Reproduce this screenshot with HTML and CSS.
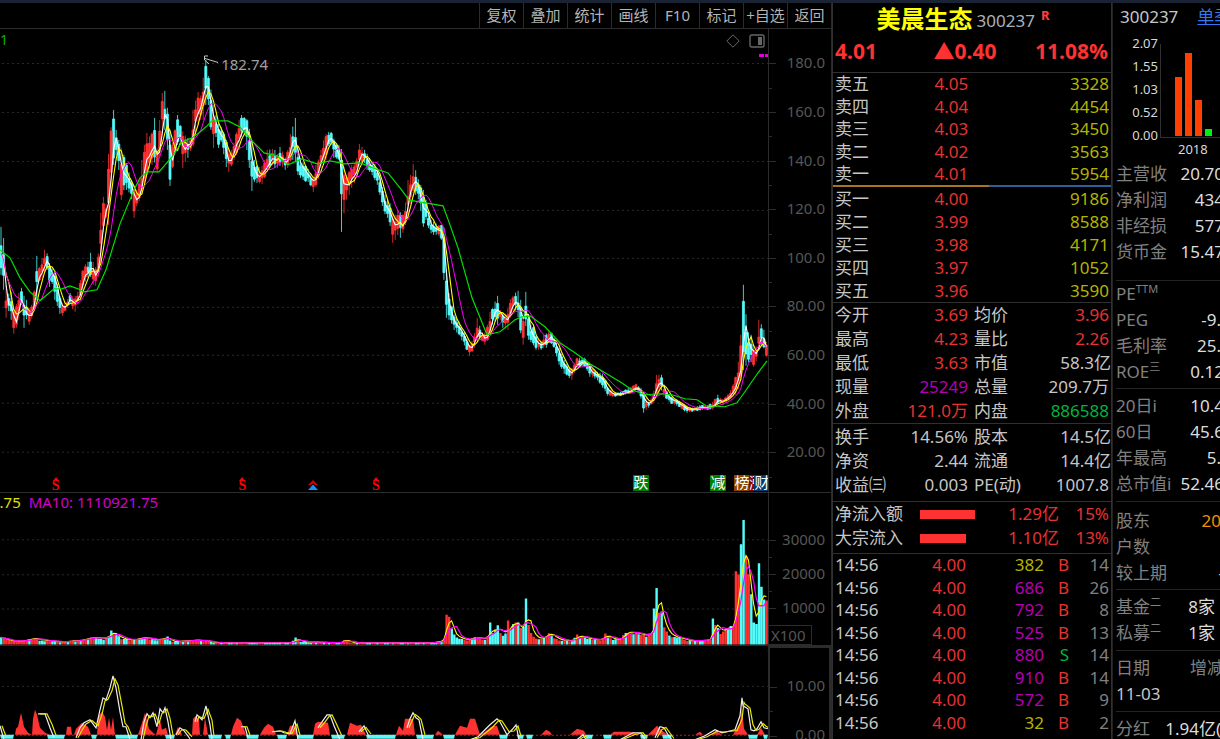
FILE: index.html
```html
<!DOCTYPE html>
<html lang="zh-CN">
<head>
<meta charset="utf-8">
<title>美晨生态 300237</title>
<link rel="stylesheet" href="styles.css">
</head>
<body>
<div class="app">
  <section class="charts">
    <nav class="toolbar">
      <button>复权</button><button>叠加</button><button>统计</button><button>画线</button><button>F10</button><button>标记</button><button>+自选</button><button>返回</button>
    </nav>

    <div class="panel price">
      <div class="plot">
        <svg id="price" viewBox="0 29 768 463" preserveAspectRatio="none"></svg>
        <span class="ma-tail">1</span>
        <span class="peak">182.74</span>
        <div class="tools">
          <svg width="14" height="14" viewBox="0 0 14 14"><path d="M7 .8 13.2 7 7 13.2 .8 7Z" fill="none" stroke="#666" /></svg>
          <svg width="16" height="14" viewBox="0 0 16 14"><rect x="1" y="1" width="14" height="12" rx="1.5" fill="none" stroke="#666" stroke-width="1.4"/><rect x="9" y="3" width="4" height="8" fill="#666"/></svg>
        </div>
        <i class="dash"></i>
        <span class="mark s1"><svg width="8" height="4" viewBox="0 0 8 4"><path d="M4 0 7 4H1Z" fill="red"/></svg>S</span>
        <span class="mark s2"><svg width="8" height="4" viewBox="0 0 8 4"><path d="M4 0 7 4H1Z" fill="red"/></svg>S</span>
        <span class="mark up"><svg width="10" height="11" viewBox="0 0 10 11"><path d="M5 0 10 5H7L5 3.5 3 5H0Z" fill="#d00000"/><path d="M5 4.500 10 10H0Z" fill="#1890ff"/></svg></span>
        <span class="mark s3"><svg width="8" height="4" viewBox="0 0 8 4"><path d="M4 0 7 4H1Z" fill="red"/></svg>S</span>
        <span class="tag t1">跌</span>
        <span class="tag t2">减</span>
        <span class="tag t3">榜</span>
        <span class="tag t4">涨</span>
        <span class="tag t5">财</span>
      </div>
      <ol class="axis"><li>180.0</li><li>160.0</li><li>140.0</li><li>120.0</li><li>100.0</li><li>80.00</li><li>60.00</li><li>40.00</li><li>20.00</li></ol>
    </div>

    <div class="panel volume">
      <div class="plot">
        <svg id="volume" viewBox="0 493 768 152" preserveAspectRatio="none"></svg>
        <p class="legend"><span class="ma5">6.75</span> <span class="ma10">MA10: 1110921.75</span></p>
      </div>
      <div class="side">
        <ol class="axis"><li>30000</li><li>20000</li><li>10000</li></ol>
        <span class="unit">X100</span>
      </div>
    </div>

    <div class="panel macd">
      <div class="plot"><svg id="macd" viewBox="0 646 768 93" preserveAspectRatio="none"></svg></div>
      <ol class="axis"><li>10.00</li><li>0.00</li></ol>
    </div>
  </section>

  <section class="quote">
    <header class="name"><h1>美晨生态</h1><span>300237</span><sup>R</sup></header>
    <div class="last"><b>4.01</b><b>▲0.40</b><b>11.08%</b></div>
    <table class="orders asks">
      <tr><th>卖五</th><td>4.05</td><td>3328</td></tr>
      <tr><th>卖四</th><td>4.04</td><td>4454</td></tr>
      <tr><th>卖三</th><td>4.03</td><td>3450</td></tr>
      <tr><th>卖二</th><td>4.02</td><td>3563</td></tr>
      <tr><th>卖一</th><td>4.01</td><td>5954</td></tr>
    </table>
    <div class="ratio"></div>
    <table class="orders bids">
      <tr><th>买一</th><td>4.00</td><td>9186</td></tr>
      <tr><th>买二</th><td>3.99</td><td>8588</td></tr>
      <tr><th>买三</th><td>3.98</td><td>4171</td></tr>
      <tr><th>买四</th><td>3.97</td><td>1052</td></tr>
      <tr><th>买五</th><td>3.96</td><td>3590</td></tr>
    </table>
    <table class="stats">
      <tr><th>今开</th><td class="red">3.69</td><th>均价</th><td class="red">3.96</td></tr>
      <tr><th>最高</th><td class="red">4.23</td><th>量比</th><td class="red">2.26</td></tr>
      <tr><th>最低</th><td class="red">3.63</td><th>市值</th><td class="cjk">58.3亿</td></tr>
      <tr><th>现量</th><td class="purple">25249</td><th>总量</th><td>209.7万</td></tr>
      <tr><th>外盘</th><td class="red">121.0万</td><th>内盘</th><td class="green">886588</td></tr>
    </table>
    <table class="stats ratios">
      <tr><th>换手</th><td>14.56%</td><th>股本</th><td class="cjk">14.5亿</td></tr>
      <tr><th>净资</th><td>2.44</td><th>流通</th><td class="cjk">14.4亿</td></tr>
      <tr><th>收益㈢</th><td>0.003</td><th>PE(动)</th><td>1007.8</td></tr>
    </table>
    <table class="flow">
      <tr><th>净流入额</th><td><i style="width:55px"></i></td><td>1.29亿</td><td>15%</td></tr>
      <tr><th>大宗流入</th><td><i style="width:46px"></i></td><td>1.10亿</td><td>13%</td></tr>
    </table>
    <table class="trades">
      <tr><th>14:56</th><td>4.00</td><td class="small">382</td><td>B</td><td>14</td></tr>
      <tr><th>14:56</th><td>4.00</td><td>686</td><td>B</td><td>26</td></tr>
      <tr><th>14:56</th><td>4.00</td><td>792</td><td>B</td><td>8</td></tr>
      <tr><th>14:56</th><td>4.00</td><td>525</td><td>B</td><td>13</td></tr>
      <tr><th>14:56</th><td>4.00</td><td>880</td><td class="green">S</td><td>14</td></tr>
      <tr><th>14:56</th><td>4.00</td><td>910</td><td>B</td><td>14</td></tr>
      <tr><th>14:56</th><td>4.00</td><td>572</td><td>B</td><td>9</td></tr>
      <tr><th>14:56</th><td>4.00</td><td class="small">32</td><td>B</td><td>2</td></tr>
      <tr><th>14:57</th><td>4.00</td><td class="small">368</td><td>B</td><td>13</td></tr>
    </table>
  </section>

  <aside class="finance">
    <header><span>300237</span><a href="#">单季</a></header>
    <div class="mini">
      <ul><li>2.07</li><li>1.55</li><li>1.03</li><li>0.52</li><li>0.00</li></ul>
      <div class="mini-plot">
        <div class="bars"><i style="height:59px"></i><i style="height:83px"></i><i style="height:36px"></i><i class="up" style="height:7px"></i></div>
        <span>2018</span>
      </div>
    </div>
    <dl class="g1">
      <div><dt>主营收</dt><dd>20.70</dd></div>
      <div><dt>净利润</dt><dd>434</dd></div>
      <div><dt>非经损</dt><dd>577</dd></div>
      <div><dt>货币金</dt><dd>15.47</dd></div>
    </dl>
    <dl class="g2">
      <div><dt>PE<sup>TTM</sup></dt><dd></dd></div>
      <div><dt>PEG</dt><dd class="edge">-9.</dd></div>
      <div><dt>毛利率</dt><dd class="edge">25.</dd></div>
      <div><dt>ROE<sup>三</sup></dt><dd>0.12</dd></div>
    </dl>
    <dl>
      <div><dt>20日i</dt><dd>10.4</dd></div>
      <div><dt>60日</dt><dd>45.6</dd></div>
      <div><dt>年最高</dt><dd class="edge">5.</dd></div>
      <div><dt>总市值i</dt><dd>52.46</dd></div>
    </dl>
    <dl class="g4">
      <div><dt>股东</dt><dd class="edge orange">20</dd></div>
      <div><dt>户数</dt><dd></dd></div>
      <div><dt>较上期</dt><dd>-</dd></div>
    </dl>
    <dl>
      <div><dt>基金<sup>二</sup></dt><dd class="inner">8家</dd></div>
      <div><dt>私募<sup>二</sup></dt><dd class="inner">1家</dd></div>
    </dl>
    <dl>
      <div><dt>日期</dt><dd class="dim">增减</dd></div>
      <div><dt class="bright">11-03</dt><dd></dd></div>
    </dl>
    <dl>
      <div><dt>分红</dt><dd class="edge">1.94亿(</dd></div>
    </dl>
  </aside>
</div>
<script src="chart.js"></script>
</body>
</html>
```
FILE: styles.css
```css
* { box-sizing: border-box; margin: 0; padding: 0; }
body {
  background: #000;
  color: #c6c6c6;
  font: 17px/24px "Noto Sans", "Noto Sans CJK SC", sans-serif;
  overflow: hidden;
}
ol, ul { list-style: none; }
table { width: 100%; border-collapse: collapse; table-layout: fixed; }
th { text-align: left; font-weight: 400; white-space: nowrap; }
td { text-align: right; white-space: nowrap; }
.app {
  height: 100vh;
  display: grid;
  grid-template-columns: minmax(0, 1fr) 280px 108px;
  border-top: 3px solid #1a2333;
}

/* chart column */
.charts { display: flex; flex-direction: column; min-height: 0; border-right: 1px solid #2a2a2a; }
.toolbar { display: flex; justify-content: flex-end; border-bottom: 1px solid #2c2c2c; }
.toolbar button {
  width: 44px;
  height: 25px;
  border: 0;
  border-left: 1px solid #2c2c2c;
  background: none;
  color: #b4b4b4;
  font: 15px/22px "Noto Sans", "Noto Sans CJK SC", sans-serif;
  padding-bottom: 2px;
  white-space: nowrap;
}
.panel { display: flex; min-height: 0; border-bottom: 1px solid #2c2c2c; }
.price { flex: 464 1 0; }
.volume { flex: 153 1 0; }
.macd { flex: 93 1 0; border-bottom: 0; }
.plot { position: relative; flex: 1; min-width: 0; overflow: hidden; }
.plot > svg { display: block; width: 100%; height: 100%; }
.side { display: flex; flex-direction: column; flex: 0 0 63px; border-left: 1px solid #2c2c2c; }
.axis {
  flex: 0 0 63px;
  display: flex;
  flex-direction: column;
  color: #565656;
  font-size: 15px;
  border-left: 1px solid #2c2c2c;
}
.side .axis { flex: 0 0 auto; border-left: 0; padding-top: 30px; }
.axis li {
  position: relative;
  flex: 1;
  display: flex;
  align-items: center;
  justify-content: flex-end;
  padding: 0 6px 2px 0;
}
.axis li::before, .axis li::after {
  content: "";
  position: absolute;
  left: 0;
  top: 50%;
  width: 7px;
  border-top: 1px solid #2c2c2c;
}
.axis li::after { top: 100%; width: 3px; }
.price .axis { padding: 10px 0 15px; }
.volume .axis li { flex: 0 0 34px; }
.macd .axis { border: 2px solid #2c2c2c; border-bottom: 0; padding-top: 14px; }
.macd .axis li { flex: 0 0 49px; padding-right: 4px; padding-bottom: 4px; }
.unit { width: 43px; line-height: 18px; font-size: 15px; padding-left: 2px; color: #565656; border: 1px solid #2c2c2c; border-left: 0; }
.ma-tail { position: absolute; left: 0; top: 1px; font-size: 14px; line-height: 20px; color: #00b400; }
.peak { position: absolute; left: 28.8%; top: 23px; font-size: 15px; color: #a0a0a0; }
.tools { position: absolute; right: 3px; top: 5px; display: flex; gap: 9px; }
.dash { position: absolute; right: 0; top: 25px; width: 9px; height: 3px; background: linear-gradient(90deg, #e000e0 5px, #000 5px 6px, #e000e0 6px); }
.mark { position: absolute; bottom: 1px; width: 10px; display: flex; flex-direction: column; align-items: center; color: red; font: 700 14px/10px "Liberation Serif", serif; }
.s1 { left: 6.6%; }
.s2 { left: 30.9%; }
.up { left: 40.1%; }
.s3 { left: 48.3%; }
.tag { position: absolute; bottom: 1px; width: 16px; height: 16px; font-size: 15px; line-height: 15px; text-align: center; color: #fff; overflow: hidden; background: #008000; }
.t1 { left: 82.4%; }
.t2 { right: 42px; }
.t3 { right: 18px; background: #8a4500; }
.t4 { right: 14px; width: 5px; text-align: left; background: #8b0000; }
.t5 { right: -2px; background: #003a70; }
.legend { position: absolute; left: -9px; top: 0; font-size: 15px; line-height: 19px; }
.ma5 { color: #e0e000; }
.ma10 { color: #d000d0; margin-left: 4px; }

/* quote column */
.quote { border-left: 1px solid #303030; border-right: 1px solid #303030; min-width: 0; overflow: hidden; }
.name { display: flex; justify-content: center; height: 33px; padding-right: 18px; line-height: 36px; color: #aab2bd; }
.name h1 { font-size: 24px; font-weight: 700; line-height: 32px; color: #ff0; margin-right: 4px; }
.name sup { margin-left: 6px; font-size: 13px; font-weight: 700; line-height: 24px; color: #ff4040; }
.last { display: flex; justify-content: space-between; height: 37px; padding: 0 3px 0 2px; font-size: 21px; line-height: 31px; color: #ff3232; border-bottom: 1px solid #303030; }
.last b:nth-child(2) { padding-left: 18px; }
.orders { line-height: 22px; border-collapse: separate; border-spacing: 0; }
.orders th { padding-left: 2px; }
.orders td { color: #b4b400; padding-right: 2px; }
.orders td:nth-child(2) { color: #e63232; padding-right: 50px; }
.asks tr:nth-child(even) td { height: 23px; }
.bids { line-height: 23px; }
.ratio { height: 2px; background: linear-gradient(90deg, #a87420 56%, #2c6098 56%); }
.stats { border-top: 1px solid #303030; border-collapse: separate; border-spacing: 0; }
.stats th { padding-left: 2px; }
.stats td:nth-child(2) { padding-right: 4px; }
.stats td:nth-child(4) { padding-right: 2px; }
.stats td.cjk:nth-child(4) { padding-right: 0; }
.ratios { padding-top: 1px; }
.flow { border-top: 1px solid #303030; margin-top: 4px; color: #e63232; }
.flow th { width: 87px; padding-left: 2px; color: #c6c6c6; }
.flow td:nth-child(2) { width: 60px; }
.flow td:nth-child(4) { width: 52px; padding-right: 2px; }
.flow i { display: block; height: 9px; background: #ff3232; }
.trades { border-top: 1px solid #303030; margin-top: 3px; line-height: 22px; color: #e63232; border-collapse: separate; border-spacing: 0; }
.trades tr:nth-child(even) td { height: 23px; }
.trades th { padding-left: 2px; color: #c6c6c6; }
.trades td:nth-child(2) { width: 70px; }
.trades td:nth-child(3) { width: 78px; color: #b400b4; }
.trades td.small:nth-child(3) { color: #b4b400; }
.trades td:nth-child(4) { width: 25px; }
.trades td:nth-child(5) { width: 42px; padding-right: 2px; color: #808080; }
.red { color: #e63232; }
.purple { color: #b400b4; }
.green { color: #00b43c; }

/* finance column */
.finance { border-left: 1px solid #222; padding-left: 3px; overflow: hidden; }
.finance header { display: flex; gap: 19px; padding-left: 4px; line-height: 27px; white-space: nowrap; }
.finance header a { color: #3278f0; text-decoration: underline; }
.mini { display: flex; height: 131px; padding-top: 2px; font-size: 13px; color: #d8d8d8; }
.mini ul { width: 42px; text-align: right; line-height: 23px; }
.mini-plot { flex: 1; margin: 12px 0 0 2px; }
.mini-plot span { display: block; padding-left: 18px; line-height: 23px; }
.bars { display: flex; align-items: flex-end; gap: 3px; height: 94px; padding: 0 0 1px 14px; border-left: 1px solid #303030; border-bottom: 1px solid #303030; }
.bars i { width: 7px; background: #ff4000; }
.bars .up { background: #00f010; }
.finance dl { border-top: 1px solid #242424; line-height: 26px; padding: 4px 0; }
.finance .g1 { border-top: 0; padding: 0 0 15px; }
.finance .g2 { padding: 0 0 3px; }
.finance .g4 { padding: 6px 0 3px; }
.finance dl div { display: flex; justify-content: space-between; height: 26px; margin-right: -9px; }
.finance dt { color: #808080; white-space: nowrap; }
.finance dd { color: #dcdcdc; white-space: nowrap; padding-right: 5px; }
.finance sup { font-size: 11px; line-height: 10px; }
.finance .edge { padding-right: 8px; }
.finance .inner { padding-right: 14px; }
.finance .orange { color: #f09000; }
.finance .dim { color: #808080; }
.finance .bright { color: #c6c6c6; }
```
FILE: chart.js
```js
(function () {
  var UP = "#ff3232", DOWN = "#54fcfc", STEP = 2.56, N = 300;
  var seed = 4242;
  function rnd() { seed = (seed * 16807) % 2147483647; return seed / 2147483647; }
  function pairs(s) {
    return s.trim().split(/\s+/).map(function (p) { return p.split(",").map(Number); });
  }
  function at(pts, x, k) {
    if (x <= pts[0][0]) return pts[0][k];
    for (var i = 1; i < pts.length; i++) {
      if (x <= pts[i][0]) {
        var a = pts[i - 1], b = pts[i];
        return a[k] + (b[k] - a[k]) * (x - a[0]) / (b[0] - a[0]);
      }
    }
    return pts[pts.length - 1][k];
  }
  /* the extreme value a candle reaches over its own width */
  function extreme(pts, x, k, pick) {
    var v = [at(pts, x, k)];
    pts.forEach(function (p) { if (Math.abs(p[0] - x) <= STEP / 2) v.push(p[k]); });
    return pick.apply(null, v);
  }
  function average(list, n) {
    return list.map(function (_, i) {
      var s = list.slice(Math.max(0, i - n + 1), i + 1);
      return s.reduce(function (a, b) { return a + b; }, 0) / s.length;
    });
  }
  function path(d, color, w, fill) {
    return '<path d="' + d + '" fill="' + (fill || "none") + '" stroke="' + color + '" stroke-width="' + (w || 1) + '"/>';
  }
  function series(list) {
    return "M" + list.map(function (v, i) { return (i * STEP + 1).toFixed(1) + " " + v.toFixed(1); }).join("L");
  }
  function poly(list) { return "M" + list.map(function (p) { return p[0] + " " + p[1]; }).join("L"); }
  function grid(ys) {
    return ys.map(function (y) {
      return '<path d="M2 ' + y + 'H768" stroke="#2a2a2a" stroke-dasharray="2 3"/>';
    }).join("");
  }

  /* price: x, high, low */
  var P = pairs("0,227,275 3,240,290 4,285,315 6,296,318 9,292,306 11,300,320 13,310,334 15,305,328 17,300,320 19,293,310 21,288,303 23,296,328 25,300,318 28,308,325 31,305,318 33,296,310 35,256,300 37,265,285 39,268,280 42,258,278 44,250,270 47,255,270 49,265,287 52,270,283 55,272,300 57,290,306 60,300,314 62,304,316 65,303,310 69,293,304 73,298,312 77,292,304 80,280,298 82,270,290 84,265,282 87,262,278 90,253,277 92,262,285 94,270,286 97,258,277 99,225,265 101,213,250 103,197,225 105,204,218 107,160,225 109,137,195 112,110,165 115,130,155 117,140,160 120,148,200 123,155,190 126,165,190 130,180,195 133,185,218 136,190,205 139,180,200 142,160,190 144,145,180 147,133,172 150,140,165 153,118,160 156,150,173 159,120,155 161,93,135 163,103,130 165,91,125 167,115,150 169,130,186 172,145,165 176,115,145 179,125,140 182,132,168 186,138,158 190,138,150 193,110,145 196,92,125 199,100,120 202,80,120 204,60,105 206,68,95 208,80,105 210,90,130 212,105,148 215,115,137 218,125,148 221,128,140 224,135,165 228,150,172 231,150,165 235,135,155 238,120,150 241,115,135 244,118,135 247,120,150 250,140,191 253,160,182 256,165,183 260,168,184 264,160,178 267,150,170 271,149,165 274,150,168 277,155,168 280,147,165 284,158,170 287,150,168 290,134,160 294,118,160 297,150,175 300,160,178 304,165,182 308,170,182 312,178,192 316,165,185 320,150,168 324,135,160 328,132,145 331,132,145 334,143,158 338,145,160 341,150,232 344,175,205 347,175,195 350,165,188 353,165,183 356,158,172 359,144,165 363,150,162 367,155,170 371,162,175 375,165,180 379,175,195 383,195,213 387,200,218 390,205,226 392,215,243 394,215,240 397,210,235 400,213,238 403,215,230 406,190,220 408,180,210 413,164,190 416,175,195 419,185,205 422,190,227 425,200,220 429,220,233 433,222,235 437,225,235 441,225,240 443,228,280 446,280,318 449,300,320 453,315,330 458,322,335 463,332,345 469,346,356 473,336,348 477,318,340 480,332,340 484,333,345 487,325,340 490,312,330 493,305,320 496,296,325 499,310,320 503,315,328 506,312,330 509,300,318 512,296,312 516,291,310 519,300,330 522,315,345 525,292,325 528,325,340 532,325,345 536,338,350 540,342,350 544,335,348 549,330,342 553,338,348 558,348,365 564,362,374 570,370,380 576,358,368 583,358,366 590,368,377 596,372,380 602,374,388 607,388,396 613,393,397 620,392,396 628,388,394 635,384,390 639,388,394 643,393,413 647,403,408 652,395,403 656,375,395 660,375,390 664,390,397 670,397,404 677,400,406 685,406,413 692,408,412 700,405,410 706,406,410 712,402,410 717,395,404 721,400,405 728,394,400 734,380,395 738,362,388 740,335,380 743,285,368 746,330,365 749,335,360 752,345,367 756,347,360 759,320,345 762,330,345 765,348,357 767,328,355");
  var G = pairs("0,250 10,258 20,278 30,292 40,301 47,295 54,289 62,289 70,286 78,289 84,292 97,290 106,270 112,250 120,224 134,190 140,178 147,172 159,172 172,157 182,142 192,138 200,132 207,126 212,121 228,121 240,127 252,141 264,153 277,156 288,165 302,159 317,164 330,161 345,164 360,163 373,168 388,173 400,188 409,200 419,202 443,206 450,225 458,248 472,298 487,335 500,332 515,320 522,317 530,316 545,327 560,343 575,353 590,364 605,373 620,382 632,390 645,395 660,394 672,395 685,399 697,400 706,406 725,407 737,403 747,389 758,373 767,361");
  var ups = "", downs = "", close = [], i;
  for (i = 0; i < N; i++) {
    var x = i * STEP;
    var hi = at(P, x, 1), lo = at(P, x, 2), r = lo - hi;
    var high = extreme(P, x, 1, Math.min), low = extreme(P, x, 2, Math.max);
    var mid = (hi + lo) / 2, next = (at(P, x + 3, 1) + at(P, x + 3, 2)) / 2;
    var rising = next - mid + (rnd() - 0.5) * 12 < 0;
    var top = hi + r * (0.05 + rnd() * 0.35), bot = lo - r * (0.05 + rnd() * 0.35);
    close.push(mid + (rnd() - 0.5) * r * 0.4);
    var d = "M" + (x + 1).toFixed(1) + " " + high.toFixed(1) + "V" + low.toFixed(1) +
      "M" + x.toFixed(1) + " " + top.toFixed(1) + "h2V" + bot.toFixed(1) + "h-2Z";
    if (rising) ups += d; else downs += d;
  }
  document.getElementById("price").innerHTML =
    grid([63.5, 112.5, 161.5, 210.5, 258.5, 307.5, 355.5, 403.5, 452.5]) +
    path(downs, DOWN, 0.8, DOWN) + path(ups, UP, 0.8, UP) +
    path(series(average(close, 2)), "#fff", 1.1) +
    path(series(average(close, 4)), "#ff0", 1.1) +
    path(series(average(close, 8)), "#f0f", 1) +
    path(poly(G), "#00e000", 1.2) +
    path("M218 62.5 205 58.5M208 56H204.5V60L209 64", "#c8c8c8", 1);

  /* volume: x, bar height */
  var V = pairs("0,8 4,6 10,4 20,4 34,7 40,5 60,3 80,5 87,7 98,8 104,6 110,14 113,12 120,7 130,5 143,8 155,5 166,8 170,3 195,5 205,4 215,2 290,2 295,7 300,3 340,2 343,6 350,2 430,2 440,4 443,8 445,34 448,30 450,16 455,9 465,5 475,8 485,6 490,22 492,12 497,20 503,10 508,24 510,15 511,28 516,22 522,15 524,46 527,24 532,10 540,6 548,13 556,6 570,4 577,10 590,6 600,5 603,11 615,5 620,7 625,14 635,13 645,10 652,15 654,36 655.5,68 658,42 660,33 665,15 672,9 690,4 705,5 710,6 712,26 720,14 727,20 732,18 734,35 736,73 739,66 741,100 743,124 745,98 747,70 749,50 751,34 755,22 757,40 759,81 762,45 764,35 767,74");
  var vols = [], vu = "", vd = "";
  for (i = 0; i < N; i++) {
    var vx = i * STEP, peak = extreme(V, vx, 1, Math.max), base = at(V, vx, 1);
    var h = peak > base * 1.05 ? peak : base * (0.7 + rnd() * 0.3);
    vols.push(644 - base * 0.9);
    var b = "M" + vx.toFixed(1) + " 644v" + (-h).toFixed(1) + "h2.4v" + h.toFixed(1) + "Z";
    var red = rnd() < 0.5;
    if (vx > 653 && vx < 657 || vx > 739 && vx < 744 || vx > 749 && vx < 762) red = false;
    if (vx > 733 && vx < 739 || vx > 744 && vx < 749 || vx > 764) red = true;
    if (red) vu += b; else vd += b;
  }
  document.getElementById("volume").innerHTML = grid([539.5, 574.5, 608.5]) +
    path(vu, "none", 0, UP) + path(vd, "none", 0, DOWN) +
    path(series(average(vols, 3)), "#ff0", 1.1) +
    path(series(average(vols, 5)), "#f0f", 1.2);

  /* oscillator: histogram x,height; bands below zero; signal lines */
  var R = pairs("0,0 15,0 16,6 18,8 21,22 24,8 28,2 32,0 33,16 35,25 37,20 40,7 45,2 50,0 66,0 67,8 71,8 72,0 74,0 76,6 82,12 88,8 91,0 97,0 98,18 102,23 105,18 107,5 109,17 111,5 113,18 115,0 138,0 142,12 145,22 149,6 153,2 156,0 160,15 162,5 166,7 168,0 175,0 178,8 182,0 192,0 193,16 196,19 199,15 200,0 203,0 205,17 208,0 231,0 233,8 237,17 241,14 246,0 260,0 264,7 268,11 273,8 276,0 287,0 290,9 296,9 297,0 313,0 315,11 318,13 328,12 330,0 347,0 350,12 357,9 361,10 366,0 396,0 399,9 403,4 405,16 413,16 415,0 435,0 438,4 443,0 455,0 460,9 467,7 470,16 475,16 480,0 485,3 491,8 497,9 500,0 541,0 546,5 550,3 552,0 570,0 577,6 584,4 586,0 610,0 614,3 630,3 635,2 640,0 648,0 657,9 662,4 668,0 695,0 700,3 703,0 710,0 716,4 722,0 733,0 740,12 742,28 744,6 748,0 757,0 761,7 765,0 768,0");
  var bands = pairs("0,14 47,65 91,97 115,138 165,175 208,222 225,231 246,259 277,287 297,314 331,345 366,396 416,434 443,455 499,508 517,524 526,533 585,593 603,612 640,648 662,672 748,758 763,768");
  var lines = [
    "0,726 4,740", "38,714 45,714 50,728 54,738", "76,738 80,728 84,723 90,720 96,728 100,710 103,698 106,700 110,688 113,676 116,688 120,712 123,727 126,727 130,740",
    "141,740 144,722 147,714 150,718 153,713 157,727 160,709 163,713 165,708 168,722 171,740", "176,735 180,728 184,731 190,739", "195,722 197,715 202,720 206,706 210,725 212,740",
    "241,727 245,727 248,738", "272,732 280,731 284,733 290,734 295,721 298,740", "318,728 322,722 327,715 330,715 334,726 340,740", "359,732 364,726 369,737",
    "407,728 410,719 413,713 416,718 419,720 423,740", "470,740 478,737 490,725 497,719 500,722 507,735 512,730 516,725 519,740",
    "577,740 583,735 586,740", "620,740 633,733 641,733 645,740", "655,738 660,727 664,728 668,735 672,740", "695,740 705,736 715,730 722,733 735,730 740,716 742,698 743,706 748,709 751,730 754,731 757,729 761,722 764,728 768,729"
  ].map(pairs);
  var hist = "M0 735L" + R.map(function (p) { return p[0] + " " + (735 - p[1]); }).join("L") + "L768 735Z";
  document.getElementById("macd").innerHTML = grid([686.5]) +
    '<path d="M0 735.5H768" stroke="#b02020" stroke-dasharray="2 2"/>' +
    path(hist, "none", 0, UP) +
    bands.map(function (p) {
      return path("M" + p[0] + " 735H" + p[1] + "L" + (p[1] - 1) + " 739H" + (p[0] + 1) + "Z", "none", 0, DOWN);
    }).join("") +
    lines.map(function (l) {
      var lag = l.map(function (p, i) {
        var q = l[Math.max(0, i - 1)];
        return [p[0] + 2, (p[1] * 3 + q[1]) / 4];
      });
      return path(poly(l), "#f0f0f0", 1.2) + path(poly(lag), "#e8e800", 1.2);
    }).join("");
})();
```
